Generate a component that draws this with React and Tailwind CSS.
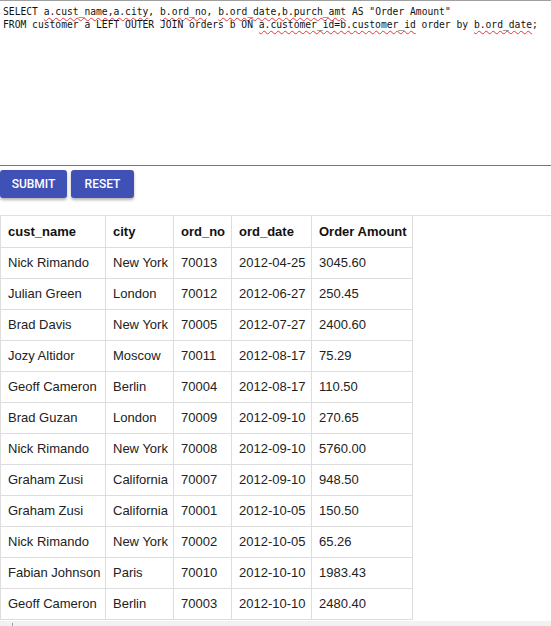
import React from 'react';

const rows = [
  ['Nick Rimando', 'New York', '70013', '2012-04-25', '3045.60'],
  ['Julian Green', 'London', '70012', '2012-06-27', '250.45'],
  ['Brad Davis', 'New York', '70005', '2012-07-27', '2400.60'],
  ['Jozy Altidor', 'Moscow', '70011', '2012-08-17', '75.29'],
  ['Geoff Cameron', 'Berlin', '70004', '2012-08-17', '110.50'],
  ['Brad Guzan', 'London', '70009', '2012-09-10', '270.65'],
  ['Nick Rimando', 'New York', '70008', '2012-09-10', '5760.00'],
  ['Graham Zusi', 'California', '70007', '2012-09-10', '948.50'],
  ['Graham Zusi', 'California', '70001', '2012-10-05', '150.50'],
  ['Nick Rimando', 'New York', '70002', '2012-10-05', '65.26'],
  ['Fabian Johnson', 'Paris', '70010', '2012-10-10', '1983.43'],
  ['Geoff Cameron', 'Berlin', '70003', '2012-10-10', '2480.40'],
];

const headers = [
  { label: 'cust_name', w: 'w-[105px]' },
  { label: 'city', w: 'w-[68px]' },
  { label: 'ord_no', w: 'w-[58px]' },
  { label: 'ord_date', w: 'w-[80px]' },
  { label: 'Order Amount', w: 'w-[101px]' },
];

// spellcheck squiggle
const Sq = ({ children }) => (
  <span className="underline decoration-wavy decoration-[#e53935] decoration-1 underline-offset-2">{children}</span>
);

const App = () => {
  return (
    <div className="bg-white min-h-[626px] flex flex-col">
      {/* query editor */}
      <div className="h-[166px] border-t border-t-[#a0a0a0] border-b border-b-[#767676] px-[3px] pt-[4px] font-['DejaVu_Sans_Mono',monospace] text-[9.67px] leading-[13px] text-[#111] whitespace-pre">
        <div>SELECT <Sq>a.cust_name,a.city</Sq>, <Sq>b.ord_no</Sq>, <Sq>b.ord_date,b.purch_amt</Sq> AS "Order Amount"</div>
        <div>FROM customer a LEFT OUTER JOIN orders b ON <Sq>a.customer_id=b.customer_id</Sq> order by <Sq>b.ord_date</Sq>;</div>
      </div>

      {/* buttons */}
      <div className="flex gap-1 mt-[4px] font-['Roboto',sans-serif]">
        <button className="h-[28px] w-[67px] bg-[#3f51b5] text-white text-[12px] font-medium rounded-[3px] shadow-[0_2px_3px_rgba(0,0,0,0.3)]">
          SUBMIT
        </button>
        <button className="h-[28px] w-[63px] bg-[#3f51b5] text-white text-[12px] font-medium rounded-[3px] shadow-[0_2px_3px_rgba(0,0,0,0.3)]">
          RESET
        </button>
      </div>

      {/* results */}
      <div className="mt-[17px] border-t border-[#e0e0e0]">
        <table className="table-fixed w-[412px] border-collapse font-['Liberation_Sans',Arial,sans-serif] text-[13px]">
          <thead>
            <tr>
              {headers.map((h) => (
                <th key={h.label} className={`${h.w} border border-[#dddddd] border-t-0 h-[31px] px-[7px] text-left font-bold text-[#111] whitespace-nowrap`}>
                  {h.label}
                </th>
              ))}
            </tr>
          </thead>
          <tbody>
            {rows.map((r, i) => (
              <tr key={i}>
                {r.map((c, j) => (
                  <td key={j} className="border border-[#dddddd] h-[31px] px-[7px] text-[#222] whitespace-nowrap">
                    {c}
                  </td>
                ))}
              </tr>
            ))}
          </tbody>
        </table>
      </div>

      {/* scrollbar track */}
      <div className="h-[7px] bg-[#f1f1f1] mt-[1px] relative">
        <div className="absolute left-[12px] top-[2px] w-px h-[3px] bg-[#999]" />
      </div>
    </div>
  );
};

export default App;
